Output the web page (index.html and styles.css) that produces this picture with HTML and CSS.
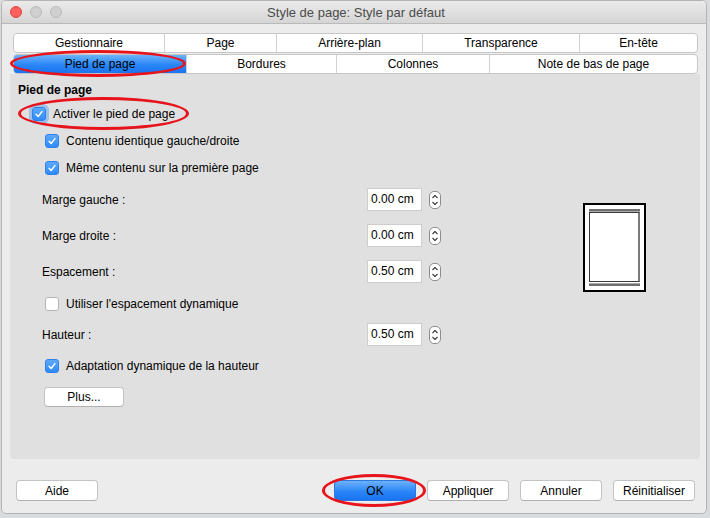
FILE: index.html
```html
<!DOCTYPE html>
<html lang="fr">
<head>
<meta charset="utf-8">
<title>Style de page</title>
<link rel="stylesheet" href="styles.css">
</head>
<body>
<div class="window">
  <div class="titlebar">
    <div class="lights">
      <span class="light red"></span>
      <span class="light gray"></span>
      <span class="light gray"></span>
    </div>
    <div class="title">Style de page: Style par défaut</div>
  </div>

  <div class="content">
    <div class="tabs">
      <div class="tabrow row1">
        <div class="tab">Gestionnaire</div>
        <div class="tab">Page</div>
        <div class="tab">Arrière-plan</div>
        <div class="tab">Transparence</div>
        <div class="tab">En-tête</div>
      </div>
      <div class="tabrow row2">
        <div class="tab selected">Pied de page</div>
        <div class="tab">Bordures</div>
        <div class="tab">Colonnes</div>
        <div class="tab">Note de bas de page</div>
      </div>
    </div>

    <div class="panel">
      <div class="heading">Pied de page</div>
      <div class="check-row main">
        <span class="cb checked focus"><svg viewBox="0 0 14 14"><path d="M3.6 7.4 L6 9.9 L10.4 4.2"/></svg></span>
        <span>Activer le pied de page</span>
      </div>
      <div class="check-row nested">
        <span class="cb checked"><svg viewBox="0 0 14 14"><path d="M3.6 7.4 L6 9.9 L10.4 4.2"/></svg></span>
        <span>Contenu identique gauche/droite</span>
      </div>
      <div class="check-row nested">
        <span class="cb checked"><svg viewBox="0 0 14 14"><path d="M3.6 7.4 L6 9.9 L10.4 4.2"/></svg></span>
        <span>Même contenu sur la première page</span>
      </div>

      <div class="form">
        <div class="fields">
          <div class="field-row">
            <span class="label">Marge gauche :</span>
            <span class="input">0.00 cm</span>
            <span class="spin"><svg viewBox="0 0 12 18"><rect x="0.5" y="0.5" width="11" height="17" rx="4.5"/><path d="M3.5 7 L6 4.5 L8.5 7 M3.5 11 L6 13.5 L8.5 11"/></svg></span>
          </div>
          <div class="field-row">
            <span class="label">Marge droite :</span>
            <span class="input">0.00 cm</span>
            <span class="spin"><svg viewBox="0 0 12 18"><rect x="0.5" y="0.5" width="11" height="17" rx="4.5"/><path d="M3.5 7 L6 4.5 L8.5 7 M3.5 11 L6 13.5 L8.5 11"/></svg></span>
          </div>
          <div class="field-row">
            <span class="label">Espacement :</span>
            <span class="input">0.50 cm</span>
            <span class="spin"><svg viewBox="0 0 12 18"><rect x="0.5" y="0.5" width="11" height="17" rx="4.5"/><path d="M3.5 7 L6 4.5 L8.5 7 M3.5 11 L6 13.5 L8.5 11"/></svg></span>
          </div>
          <div class="check-row inner gap-a">
            <span class="cb"></span>
            <span>Utiliser l'espacement dynamique</span>
          </div>
          <div class="field-row gap-b">
            <span class="label">Hauteur :</span>
            <span class="input">0.50 cm</span>
            <span class="spin"><svg viewBox="0 0 12 18"><rect x="0.5" y="0.5" width="11" height="17" rx="4.5"/><path d="M3.5 7 L6 4.5 L8.5 7 M3.5 11 L6 13.5 L8.5 11"/></svg></span>
          </div>
          <div class="check-row inner gap-c">
            <span class="cb checked"><svg viewBox="0 0 14 14"><path d="M3.6 7.4 L6 9.9 L10.4 4.2"/></svg></span>
            <span>Adaptation dynamique de la hauteur</span>
          </div>
          <div class="btn plus">Plus...</div>
        </div>
        <div class="preview">
          <div class="pv-bar"></div>
          <div class="pv-page"></div>
          <div class="pv-bar foot"></div>
        </div>
      </div>
    </div>

    <div class="buttons">
      <div class="btn">Aide</div>
      <div class="right-btns">
        <div class="btn primary">OK</div>
        <div class="btn">Appliquer</div>
        <div class="btn">Annuler</div>
        <div class="btn">Réinitialiser</div>
      </div>
    </div>
  </div>
</div>

<div class="ring ring-tab"></div>
<div class="ring ring-check"></div>
<div class="ring ring-ok"></div>
</body>
</html>
```

FILE: styles.css
```css
* { box-sizing: border-box; }

html, body {
  margin: 0;
  padding: 0;
}

body {
  width: 710px;
  height: 518px;
  overflow: hidden;
  position: relative;
  background: #d9dcdf;
  font-family: "Liberation Sans", Arial, sans-serif;
  font-size: 12px;
  color: #000;
}

.window {
  margin-left: 1px;
  width: 706px;
  height: 514px;
  background: #ececec;
  border: 1px solid #b4b4b4;
  border-radius: 5px 5px 5px 5px;
  overflow: hidden;
}

.titlebar {
  height: 23px;
  background: linear-gradient(#ebebeb, #d5d5d5);
  border-bottom: 1px solid #b9b9b9;
  display: flex;
  align-items: center;
  position: relative;
}

.lights {
  display: flex;
  gap: 8px;
  padding-left: 8px;
}

.light {
  width: 12px;
  height: 12px;
  border-radius: 50%;
}

.light.red {
  background: #fc605c;
  border: 1px solid #de4741;
}

.light.gray {
  background: #d0d0d0;
  border: 1px solid #bcbcbc;
}

.title {
  flex: 1;
  text-align: center;
  font-size: 13px;
  color: #4b4b4b;
  margin-left: -56px;
  padding-top: 1px;
}

.content {
  padding: 9px 6px 0 8px;
}

.tabs {
  margin: 0 2px 0 3px;
  display: flex;
  flex-direction: column;
  gap: 1px;
}

.tabrow {
  display: grid;
  height: 20px;
  background: #fff;
  border: 1px solid #c6c6c6;
  border-radius: 4px;
  overflow: hidden;
}

.row1 { grid-template-columns: 150px 112px 146px 157px 1fr; }
.row2 { grid-template-columns: 172px 150px 153px 1fr; }

.tab {
  display: flex;
  align-items: center;
  justify-content: center;
  border-left: 1px solid #d2d2d2;
  line-height: 18px;
}

.tab:first-child { border-left: none; }

.tab.selected {
  background: linear-gradient(#6bb2fb, #2a86f7 55%, #1b73f0);
  color: #000;
}

.panel {
  height: 385px;
  background: #e0e0e0;
  border-radius: 0 0 4px 4px;
  padding: 8px 8px 0 8px;
  display: flex;
  flex-direction: column;
}

.heading {
  font-weight: bold;
  line-height: 16px;
  height: 16px;
}

.check-row {
  display: flex;
  align-items: center;
  height: 22px;
  gap: 7px;
}

.check-row.main { margin-top: 5px; margin-left: 14px; }
.check-row.nested { margin-top: 5px; margin-left: 27px; }
.check-row.inner { margin-left: 3px; }

.cb {
  width: 14px;
  height: 14px;
  border-radius: 3px;
  background: #fff;
  border: 1px solid #b3b3b3;
  flex: none;
  display: flex;
}

.cb.checked {
  background: linear-gradient(#5daaff, #2f8af7);
  border: 1px solid #2d82ee;
}

.cb.focus {
  box-shadow: 0 0 0 3px rgba(110, 165, 235, 0.55);
}

.cb svg {
  width: 12px;
  height: 12px;
}

.cb svg path {
  fill: none;
  stroke: #fff;
  stroke-width: 1.7;
  stroke-linecap: round;
  stroke-linejoin: round;
}

.form {
  display: flex;
  margin-top: 9px;
  margin-left: 24px;
}

.fields {
  display: flex;
  flex-direction: column;
  width: 399px;
}

.field-row {
  display: flex;
  align-items: center;
  height: 23px;
}

.field-row + .field-row { margin-top: 13px; }

.gap-a { margin-top: 10px; }
.field-row.gap-b { margin-top: 8px; }
.gap-c { margin-top: 9px; }

.label {
  width: 325px;
}

.input {
  width: 55px;
  height: 23px;
  background: #fff;
  border: 1px solid #cdcdcd;
  padding-left: 3px;
  line-height: 21px;
}

.spin {
  margin-left: 7px;
  width: 12px;
  height: 18px;
  display: flex;
}

.spin svg { width: 12px; height: 18px; }

.spin rect {
  fill: #fff;
  stroke: #8d8d8d;
  stroke-width: 1;
}

.spin path {
  fill: none;
  stroke: #3c3c3c;
  stroke-width: 1.1;
  stroke-linejoin: round;
}

.btn {
  height: 21px;
  width: 82px;
  background: #fff;
  border: 1px solid #c3c3c3;
  border-bottom-color: #b0b0b0;
  border-radius: 4px;
  display: flex;
  align-items: center;
  justify-content: center;
}

.btn.plus {
  margin-top: 10px;
  margin-left: 2px;
  width: 80px;
  height: 20px;
}

.preview {
  margin-top: 15px;
  margin-left: 142px;
  width: 63px;
  height: 89px;
  background: #fff;
  border: 2px solid #000;
  padding: 4px 4px 0 4px;
  display: flex;
  flex-direction: column;
  align-items: center;
}

.pv-bar {
  width: 51px;
  height: 3px;
  background: #6f6f6f;
  border-bottom: 1px solid #a9a9a9;
}

.pv-bar.foot {
  border-bottom: none;
  border-top: 1px solid #a9a9a9;
  margin-top: 1px;
}

.pv-page {
  width: 51px;
  height: 70px;
  border: 1px solid #3a3a3a;
  border-right: 2px solid #7a7a7a;
}

.buttons {
  display: flex;
  justify-content: space-between;
  margin-top: 21px;
  padding: 0 5px 0 6px;
}

.right-btns {
  display: flex;
  gap: 11px;
}

.btn.primary {
  background: linear-gradient(#6db1fb, #2a86f7 55%, #1a72f0);
  border-color: #2a78e0;
}

.ring {
  position: absolute;
  border: 3px solid #e8141c;
  border-radius: 50%;
}

.ring-tab { left: 10px; top: 50px; width: 176px; height: 27px; }
.ring-check { left: 18px; top: 97px; width: 171px; height: 33px; }
.ring-ok { left: 322px; top: 474px; width: 104px; height: 33px; }
```
